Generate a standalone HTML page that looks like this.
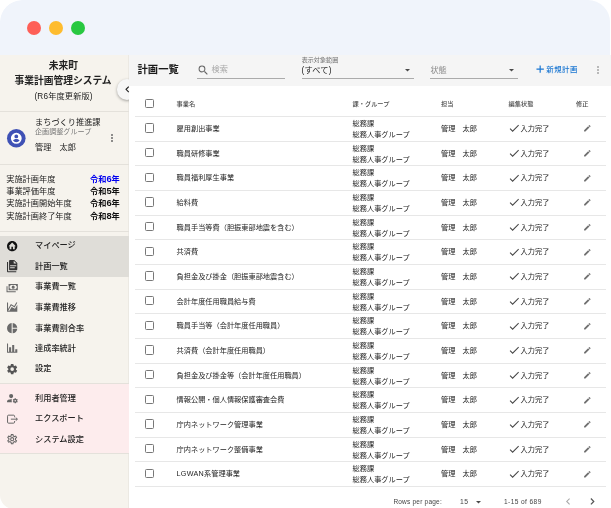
<!DOCTYPE html><html lang="ja"><head><meta charset="utf-8"><title>計画一覧</title><style>
*{box-sizing:border-box;margin:0;padding:0}
html,body{width:611px;height:508px;overflow:hidden;background:#fff}
body{font-family:"Liberation Sans","Noto Sans CJK JP",sans-serif;color:#222;position:relative}
.win{will-change:transform;position:absolute;left:0;top:0;width:611px;height:509px;border-radius:22px 0 0 14px;overflow:hidden}
.bar{position:absolute;left:0;top:0;width:609.6px;height:56px;background:#f0f4fb;border-radius:22px 22px 0 0}
.dot{position:absolute;top:20.5px;width:14px;height:14px;border-radius:50%}
.side{position:absolute;left:0;top:54.7px;width:129.2px;height:456px;background:#f6f3ed;border-right:1px solid #ece9e3}
.main{position:absolute;left:129.2px;top:54.7px;width:481.8px;height:453.3px;background:#fff}
.tb{position:absolute;left:0;top:0;width:100%;height:31.8px;background:#f5f5f5}
.abs{position:absolute;white-space:nowrap}
.hline{position:absolute;height:0.7px;background:#e7e7e7}
.sdiv{position:absolute;left:0;width:129px;height:0.7px;background:#e4e1db}
.t{position:absolute;white-space:nowrap;line-height:1}
.cb{position:absolute;width:9.4px;height:9.4px;border:1px solid #787878;border-radius:1.4px;background:#fff}
.mi{position:absolute;left:35px;font-size:8.2px;font-weight:500;color:#222;line-height:1;white-space:nowrap}
svg{position:absolute;overflow:visible}
</style></head><body>
<div class="win"><div class="bar"></div>
<div class="dot" style="left:26.7px;background:#fe5f57"></div>
<div class="dot" style="left:48.6px;background:#febc2e"></div>
<div class="dot" style="left:70.7px;background:#28c840"></div>
<div class="side">
<div class="t" style="left:63.4px;transform:translateX(-50%);top:6.22px;font-size:9.75px;font-weight:700;color:#222;">未来町</div>
<div class="t" style="left:63.0px;transform:translateX(-50%);top:20.82px;font-size:9.75px;font-weight:700;color:#222;">事業計画管理システム</div>
<div class="t" style="left:63.6px;transform:translateX(-50%);top:38.00px;font-size:8.2px;font-weight:400;color:#222;letter-spacing:0.15px;">(R6年度更新版)</div>
<div class="sdiv" style="top:56.2px"></div>
<svg style="left:7.25px;top:74.4px" width="18.6" height="18.6" viewBox="0 0 24 24"><circle cx="12" cy="12" r="12" fill="#3f51b5"/><path fill="#fff" d="M12 5a7 7 0 1 0 0 14 7 7 0 0 0 0-14zm0 2.1a2.45 2.45 0 1 1 0 4.9 2.45 2.45 0 0 1 0-4.9zm0 10.1a5.1 5.1 0 0 1-4.2-2.25c.02-1.4 2.8-2.17 4.2-2.17s4.18.77 4.2 2.17A5.1 5.1 0 0 1 12 17.2z"/></svg>
<div class="t" style="left:35px;top:64.80px;font-size:8.2px;font-weight:400;color:#222;">まちづくり推進課</div>
<div class="t" style="left:35px;top:73.95px;font-size:7.1px;font-weight:400;color:#787878;">企画調整グループ</div>
<div class="t" style="left:35px;top:89.80px;font-size:8.2px;font-weight:400;color:#222;">管理　太郎</div>
<div class="abs" style="left:110.7px;top:79.15px;width:1.9px;height:1.9px;border-radius:50%;background:#6b6b6b"></div>
<div class="abs" style="left:110.7px;top:82.35px;width:1.9px;height:1.9px;border-radius:50%;background:#6b6b6b"></div>
<div class="abs" style="left:110.7px;top:85.55px;width:1.9px;height:1.9px;border-radius:50%;background:#6b6b6b"></div>
<div class="sdiv" style="top:109.8px"></div>
<div class="t" style="left:6.2px;top:121.30px;font-size:8.2px;font-weight:400;color:#222;">実施計画年度</div>
<div class="t" style="right:8.4px;top:121.30px;font-size:8.2px;font-weight:700;color:#0000f0;">令和<span style="font-size:9.3px;line-height:0">6</span>年</div>
<div class="t" style="left:6.2px;top:133.55px;font-size:8.2px;font-weight:400;color:#222;">事業評価年度</div>
<div class="t" style="right:8.4px;top:133.55px;font-size:8.2px;font-weight:700;color:#111;">令和<span style="font-size:9.3px;line-height:0">5</span>年</div>
<div class="t" style="left:6.2px;top:145.80px;font-size:8.2px;font-weight:400;color:#222;">実施計画開始年度</div>
<div class="t" style="right:8.4px;top:145.80px;font-size:8.2px;font-weight:700;color:#111;">令和<span style="font-size:9.3px;line-height:0">6</span>年</div>
<div class="t" style="left:6.2px;top:158.05px;font-size:8.2px;font-weight:400;color:#222;">実施計画終了年度</div>
<div class="t" style="right:8.4px;top:158.05px;font-size:8.2px;font-weight:700;color:#111;">令和<span style="font-size:9.3px;line-height:0">8</span>年</div>
<div class="sdiv" style="top:176.6px"></div>
<div class="abs" style="left:0;top:180.9px;width:129px;height:41.1px;background:#dfddd8"></div>
<div class="abs" style="left:0;top:328.7px;width:129px;height:69.9px;background:#fdeced"></div>
<div class="sdiv" style="top:328.4px"></div>
<div class="sdiv" style="top:398.6px"></div>
<div class="mi" style="top:187.70px">マイページ</div>
<svg style="left:6.2px;top:184.93px" width="12.34" height="12.34" viewBox="0 0 24 24"><path fill="#111" d="M19.07,4.93C17.22,3 14.66,1.96 12,2C9.34,1.96 6.79,3 4.94,4.93C3,6.78 1.96,9.34 2,12C1.96,14.66 3,17.21 4.93,19.06C6.78,21 9.34,22.04 12,22C14.66,22.04 17.21,21 19.06,19.07C21,17.22 22.04,14.66 22,12C22.04,9.34 21,6.78 19.07,4.930M17,12V18H13.500V13H10.500V18H7V12H5L12,5L19.040,12H17Z"/></svg>
<div class="mi" style="top:208.30px">計画一覧</div>
<svg style="left:6.2px;top:205.53px" width="12.34" height="12.34" viewBox="0 0 24 24"><path fill="#333" d="M4,4V22H20V24H4C2.900,24 2,23.100 2,22V4H4M15,7H20.500L15,1.500V7M8,0H16L22,6V18C22,19.110 21.110,20 20,20H8C6.890,20 6,19.100 6,18V2C6,0.890 6.890,0 8,0M17,16V14H8V16H17M20,12V10H8V12H20Z"/></svg>
<div class="mi" style="top:228.80px">事業費一覧</div>
<svg style="left:6.2px;top:226.03px" width="12.34" height="12.34" viewBox="0 0 24 24"><path fill="#6a6a6a" d="M5,6H23V18H5V6M14,9A3,3 0 0,1 17,12A3,3 0 0,1 14,15A3,3 0 0,1 11,12A3,3 0 0,1 14,9M9,8A2,2 0 0,1 7,10V14A2,2 0 0,1 9,16H19A2,2 0 0,1 21,14V10A2,2 0 0,1 19,8H9M1,10H3V20H19V22H1V10Z"/></svg>
<div class="mi" style="top:249.40px">事業費推移</div>
<svg style="left:6.2px;top:246.63px" width="12.34" height="12.34" viewBox="0 0 24 24"><path fill="#6a6a6a" d="M17.450,15.180L22,7.310V19L22,21H2V3H4V15.540L9.500,6L16,9.780L20.240,2.450L21.970,3.450L16.740,12.500L10.230,8.750L4.310,19H6.570L10.960,11.440L17.450,15.180Z"/></svg>
<div class="mi" style="top:269.90px">事業費割合率</div>
<svg style="left:6.2px;top:267.13px" width="12.34" height="12.34" viewBox="0 0 24 24"><path fill="#6a6a6a" d="M11,2V22C5.900,21.500 2,17.200 2,12C2,6.800 5.900,2.500 11,2M13,2V11H22C21.500,6.200 17.800,2.500 13,2M13,13V22C17.700,21.500 21.500,17.800 22,13H13Z"/></svg>
<div class="mi" style="top:290.50px">達成率統計</div>
<svg style="left:6.2px;top:287.73px" width="12.34" height="12.34" viewBox="0 0 24 24"><path fill="#6a6a6a" d="M22,21H2V3H4V19H6V10H10V19H12V6H16V19H18V14H22V21Z"/></svg>
<div class="mi" style="top:310.70px">設定</div>
<svg style="left:6.2px;top:307.93px" width="12.34" height="12.34" viewBox="0 0 24 24"><path fill="#555" d="M12,15.5A3.5,3.5 0 0,1 8.5,12A3.5,3.5 0 0,1 12,8.5A3.5,3.5 0 0,1 15.5,12A3.5,3.5 0 0,1 12,15.5M19.43,12.97C19.47,12.65 19.5,12.33 19.5,12C19.5,11.67 19.47,11.34 19.43,11L21.54,9.37C21.73,9.22 21.78,8.95 21.66,8.73L19.66,5.27C19.54,5.05 19.27,4.96 19.05,5.05L16.56,6.05C16.04,5.66 15.5,5.32 14.87,5.07L14.5,2.42C14.46,2.18 14.25,2 14,2H10C9.75,2 9.54,2.18 9.5,2.42L9.13,5.07C8.5,5.32 7.96,5.66 7.44,6.05L4.95,5.05C4.73,4.96 4.46,5.05 4.34,5.27L2.34,8.73C2.21,8.95 2.27,9.22 2.46,9.37L4.57,11C4.53,11.34 4.5,11.67 4.5,12C4.5,12.33 4.53,12.65 4.57,12.97L2.46,14.63C2.27,14.78 2.21,15.05 2.34,15.27L4.34,18.73C4.46,18.95 4.73,19.03 4.95,18.95L7.44,17.94C7.96,18.34 8.5,18.68 9.13,18.93L9.5,21.58C9.54,21.82 9.75,22 10,22H14C14.25,22 14.46,21.82 14.5,21.58L14.87,18.93C15.5,18.67 16.04,18.34 16.56,17.94L19.05,18.95C19.27,19.03 19.54,18.95 19.66,18.73L21.66,15.27C21.78,15.05 21.73,14.78 21.54,14.63L19.43,12.97Z"/></svg>
<div class="mi" style="top:340.30px">利用者管理</div>
<svg style="left:6.2px;top:337.53px" width="12.34" height="12.34" viewBox="0 0 24 24"><path fill="#666" d="M10 4A4 4 0 0 0 6 8A4 4 0 0 0 10 12A4 4 0 0 0 14 8A4 4 0 0 0 10 4M17 12C16.870 12 16.760 12.090 16.740 12.210L16.550 13.530C16.250 13.660 15.960 13.820 15.700 14L14.460 13.500C14.350 13.500 14.220 13.500 14.150 13.630L13.150 15.360C13.090 15.470 13.110 15.600 13.210 15.680L14.270 16.500C14.250 16.670 14.240 16.830 14.240 17C14.240 17.170 14.250 17.330 14.270 17.500L13.210 18.320C13.120 18.400 13.090 18.530 13.150 18.640L14.150 20.370C14.210 20.500 14.340 20.500 14.460 20.500L15.700 20C15.960 20.180 16.240 20.350 16.550 20.470L16.740 21.790C16.760 21.910 16.860 22 17 22H19C19.110 22 19.220 21.910 19.240 21.790L19.430 20.470C19.730 20.340 20 20.180 20.270 20L21.500 20.500C21.630 20.500 21.760 20.500 21.830 20.370L22.830 18.640C22.890 18.530 22.860 18.400 22.770 18.320L21.700 17.500C21.720 17.330 21.740 17.170 21.740 17C21.740 16.830 21.730 16.670 21.700 16.500L22.760 15.680C22.850 15.600 22.880 15.470 22.820 15.360L21.820 13.630C21.760 13.500 21.630 13.500 21.500 13.500L20.270 14C20 13.820 19.730 13.650 19.420 13.530L19.230 12.210C19.220 12.090 19.110 12 19 12H17M10 14C5.580 14 2 15.790 2 18V20H11.680A7 7 0 0 1 11 17A7 7 0 0 1 11.640 14.090C11.110 14.030 10.560 14 10 14M18 15.500C18.830 15.500 19.500 16.170 19.500 17C19.500 17.830 18.830 18.500 18 18.500C17.160 18.500 16.500 17.830 16.500 17C16.500 16.170 17.170 15.500 18 15.500Z"/></svg>
<div class="mi" style="top:360.80px">エクスポート</div>
<svg style="left:6.2px;top:358.03px" width="12.34" height="12.34" viewBox="0 0 24 24"><path fill="none" stroke="#5c5c5c" stroke-width="1.800" stroke-linejoin="round" d="M16.600 8.300V6.200a2 2 0 0 0-2-2H5a2 2 0 0 0-2 2v11.600a2 2 0 0 0 2 2h9.600a2 2 0 0 0 2-2v-2.100"/><path fill="none" stroke="#5c5c5c" stroke-width="1.800" d="M9.500 12H22M19 8.900 22.200 12 19 15.100"/></svg>
<div class="mi" style="top:381.40px">システム設定</div>
<svg style="left:6.2px;top:378.63px" width="12.34" height="12.34" viewBox="0 0 24 24"><path fill="#666" d="M12,8A4,4 0 0,1 16,12A4,4 0 0,1 12,16A4,4 0 0,1 8,12A4,4 0 0,1 12,8M12,10A2,2 0 0,0 10,12A2,2 0 0,0 12,14A2,2 0 0,0 14,12A2,2 0 0,0 12,10M10,22C9.750,22 9.540,21.820 9.500,21.580L9.130,18.930C8.500,18.680 7.960,18.340 7.440,17.940L4.950,18.950C4.730,19.030 4.460,18.950 4.340,18.730L2.340,15.270C2.210,15.050 2.270,14.780 2.460,14.630L4.570,12.970L4.500,12L4.570,11L2.460,9.370C2.270,9.220 2.210,8.950 2.340,8.730L4.340,5.270C4.460,5.050 4.730,4.960 4.950,5.050L7.440,6.050C7.960,5.660 8.500,5.320 9.130,5.070L9.500,2.420C9.540,2.180 9.750,2 10,2H14C14.250,2 14.460,2.180 14.500,2.420L14.870,5.070C15.500,5.320 16.040,5.660 16.560,6.050L19.050,5.050C19.270,4.960 19.540,5.050 19.660,5.270L21.660,8.730C21.790,8.950 21.730,9.220 21.540,9.370L19.430,11L19.500,12L19.430,13L21.540,14.630C21.730,14.780 21.790,15.050 21.660,15.270L19.660,18.730C19.540,18.950 19.270,19.040 19.050,18.950L16.560,17.950C16.040,18.340 15.500,18.680 14.870,18.930L14.500,21.580C14.460,21.820 14.250,22 14,22H10M11.250,4L10.880,6.610C9.680,6.860 8.620,7.500 7.850,8.390L5.440,7.350L4.690,8.650L6.800,10.200C6.400,11.370 6.400,12.640 6.800,13.800L4.680,15.360L5.430,16.660L7.860,15.620C8.630,16.500 9.680,17.140 10.870,17.380L11.240,20H12.760L13.130,17.390C14.320,17.140 15.370,16.500 16.140,15.620L18.570,16.660L19.320,15.360L17.200,13.810C17.600,12.640 17.600,11.370 17.200,10.200L19.310,8.650L18.560,7.350L16.150,8.390C15.380,7.500 14.320,6.860 13.120,6.620L12.750,4H11.250Z"/></svg>
</div>
<div class="abs" style="left:116.8px;top:79.1px;width:20.6px;height:20.6px;border-radius:50%;background:#f7f7f7;box-shadow:0 1px 3px rgba(0,0,0,.35)"></div>
<div class="main">
<div class="tb"></div>
<div class="t" style="left:8.40px;top:10.65px;font-size:10.3px;font-weight:700;color:#1a1a1a;">計画一覧</div>
<svg style="left:67.8px;top:9.3px" width="12.6" height="12.6" viewBox="0 0 24 24"><path fill="#666" d="M9.500 3A6.500 6.500 0 0 1 16 9.500c0 1.610-.590 3.090-1.560 4.230l.270.270h.790l5 5-1.500 1.500-5-5v-.790l-.270-.270A6.516 6.516 0 0 1 9.500 16 6.500 6.500 0 0 1 3 9.500 6.500 6.500 0 0 1 9.500 3m0 2C7 5 5 7 5 9.500S7 14 9.500 14 14 12 14 9.500 12 5 9.500 5z"/></svg>
<div class="t" style="left:82.30px;top:11.80px;font-size:8.2px;font-weight:400;color:#a8a8a8;">検索</div>
<div class="hline" style="left:67.8px;top:23.2px;width:88.4px;background:#ababab"></div>
<div class="t" style="left:172.50px;top:2.45px;font-size:6.1px;font-weight:400;color:#707070;">表示対象範囲</div>
<div class="t" style="left:172.30px;top:12.20px;font-size:8.2px;font-weight:400;color:#222;letter-spacing:0.2px;">(すべて)</div>
<div class="hline" style="left:172.4px;top:23.2px;width:112.6px;background:#ababab"></div>
<svg style="left:276.05px;top:13.90px" width="5.0" height="2.5" viewBox="0 0 10 5"><path fill="#4a4a4a" d="M0 0h10L5 5z"/></svg>
<div class="t" style="left:301.20px;top:11.90px;font-size:8.2px;font-weight:400;color:#8a8a8a;">状態</div>
<div class="hline" style="left:300.8px;top:23.2px;width:87.8px;background:#ababab"></div>
<svg style="left:380.00px;top:13.90px" width="5.0" height="2.5" viewBox="0 0 10 5"><path fill="#4a4a4a" d="M0 0h10L5 5z"/></svg>
<svg style="left:404.5px;top:8.7px" width="12.34" height="12.34" viewBox="0 0 24 24"><path fill="#1976d2" d="M19.200 13.150h-6.050v6.050h-2.300v-6.050H4.800v-2.300h6.050V4.800h2.300v6.050h6.050z"/></svg>
<div class="t" style="left:417.00px;top:11.00px;font-size:7.4px;font-weight:500;color:#1976d2;letter-spacing:0.55px;">新規計画</div>
<div class="abs" style="left:468.2px;top:11.05px;width:1.9px;height:1.9px;border-radius:50%;background:#a6a6a6"></div>
<div class="abs" style="left:468.2px;top:14.15px;width:1.9px;height:1.9px;border-radius:50%;background:#a6a6a6"></div>
<div class="abs" style="left:468.2px;top:17.25px;width:1.9px;height:1.9px;border-radius:50%;background:#a6a6a6"></div>
<div class="cb" style="left:15.80px;top:43.90px"></div>
<div class="t" style="left:47.40px;top:46.50px;font-size:6.2px;font-weight:500;color:#4a4a4a;">事業名</div>
<div class="t" style="left:223.40px;top:46.50px;font-size:6.2px;font-weight:500;color:#4a4a4a;">課・グループ</div>
<div class="t" style="left:311.80px;top:46.50px;font-size:6.2px;font-weight:500;color:#4a4a4a;">担当</div>
<div class="t" style="left:379.40px;top:46.50px;font-size:6.2px;font-weight:500;color:#4a4a4a;">編集状態</div>
<div class="t" style="left:446.80px;top:46.50px;font-size:6.2px;font-weight:500;color:#4a4a4a;">修正</div>
<div class="hline" style="left:5.8px;top:61.40px;width:471px"></div>
<div class="cb" style="left:15.80px;top:68.59px"></div>
<div class="t" style="left:47.40px;top:70.24px;font-size:7.2px;font-weight:400;color:#222;">雇用創出事業</div>
<div class="t" style="left:223.40px;top:65.34px;font-size:7.2px;font-weight:400;color:#222;">総務課</div>
<div class="t" style="left:223.40px;top:76.24px;font-size:7.2px;font-weight:400;color:#222;">総務人事グループ</div>
<div class="t" style="left:311.80px;top:70.24px;font-size:7.2px;font-weight:400;color:#222;">管理　太郎</div>
<svg style="left:379.20px;top:67.72px" width="12.34" height="12.34" viewBox="0 0 24 24"><path fill="none" stroke="#454545" stroke-width="1.950" d="M4 12.900l5 5L20.700 6.200"/></svg>
<div class="t" style="left:391.40px;top:70.24px;font-size:7.2px;font-weight:400;color:#222;">入力完了</div>
<svg style="left:453.60px;top:69.74px" width="8.7" height="8.7" viewBox="0 0 24 24"><path fill="#707070" d="M20.710 7.040c.390-.390.390-1.040 0-1.410l-2.340-2.340c-.370-.390-1.020-.390-1.410 0l-1.840 1.830 3.750 3.750M3 17.250V21h3.750L17.810 9.930l-3.750-3.750L3 17.250z"/></svg>
<div class="hline" style="left:5.8px;top:86.07px;width:471px"></div>
<div class="cb" style="left:15.80px;top:93.25px"></div>
<div class="t" style="left:47.40px;top:94.91px;font-size:7.2px;font-weight:400;color:#222;">職員研修事業</div>
<div class="t" style="left:223.40px;top:90.01px;font-size:7.2px;font-weight:400;color:#222;">総務課</div>
<div class="t" style="left:223.40px;top:100.91px;font-size:7.2px;font-weight:400;color:#222;">総務人事グループ</div>
<div class="t" style="left:311.80px;top:94.91px;font-size:7.2px;font-weight:400;color:#222;">管理　太郎</div>
<svg style="left:379.20px;top:92.38px" width="12.34" height="12.34" viewBox="0 0 24 24"><path fill="none" stroke="#454545" stroke-width="1.950" d="M4 12.900l5 5L20.700 6.200"/></svg>
<div class="t" style="left:391.40px;top:94.91px;font-size:7.2px;font-weight:400;color:#222;">入力完了</div>
<svg style="left:453.60px;top:94.41px" width="8.7" height="8.7" viewBox="0 0 24 24"><path fill="#707070" d="M20.710 7.040c.390-.390.390-1.040 0-1.410l-2.340-2.340c-.370-.390-1.020-.390-1.410 0l-1.840 1.830 3.750 3.750M3 17.250V21h3.750L17.810 9.930l-3.750-3.750L3 17.250z"/></svg>
<div class="hline" style="left:5.8px;top:110.74px;width:471px"></div>
<div class="cb" style="left:15.80px;top:117.93px"></div>
<div class="t" style="left:47.40px;top:119.58px;font-size:7.2px;font-weight:400;color:#222;">職員福利厚生事業</div>
<div class="t" style="left:223.40px;top:114.68px;font-size:7.2px;font-weight:400;color:#222;">総務課</div>
<div class="t" style="left:223.40px;top:125.58px;font-size:7.2px;font-weight:400;color:#222;">総務人事グループ</div>
<div class="t" style="left:311.80px;top:119.58px;font-size:7.2px;font-weight:400;color:#222;">管理　太郎</div>
<svg style="left:379.20px;top:117.06px" width="12.34" height="12.34" viewBox="0 0 24 24"><path fill="none" stroke="#454545" stroke-width="1.950" d="M4 12.900l5 5L20.700 6.200"/></svg>
<div class="t" style="left:391.40px;top:119.58px;font-size:7.2px;font-weight:400;color:#222;">入力完了</div>
<svg style="left:453.60px;top:119.08px" width="8.7" height="8.7" viewBox="0 0 24 24"><path fill="#707070" d="M20.710 7.040c.390-.390.390-1.040 0-1.410l-2.340-2.340c-.370-.390-1.020-.390-1.410 0l-1.840 1.830 3.750 3.750M3 17.250V21h3.750L17.810 9.930l-3.750-3.750L3 17.250z"/></svg>
<div class="hline" style="left:5.8px;top:135.41px;width:471px"></div>
<div class="cb" style="left:15.80px;top:142.60px"></div>
<div class="t" style="left:47.40px;top:144.25px;font-size:7.2px;font-weight:400;color:#222;">給料費</div>
<div class="t" style="left:223.40px;top:139.35px;font-size:7.2px;font-weight:400;color:#222;">総務課</div>
<div class="t" style="left:223.40px;top:150.25px;font-size:7.2px;font-weight:400;color:#222;">総務人事グループ</div>
<div class="t" style="left:311.80px;top:144.25px;font-size:7.2px;font-weight:400;color:#222;">管理　太郎</div>
<svg style="left:379.20px;top:141.73px" width="12.34" height="12.34" viewBox="0 0 24 24"><path fill="none" stroke="#454545" stroke-width="1.950" d="M4 12.900l5 5L20.700 6.200"/></svg>
<div class="t" style="left:391.40px;top:144.25px;font-size:7.2px;font-weight:400;color:#222;">入力完了</div>
<svg style="left:453.60px;top:143.75px" width="8.7" height="8.7" viewBox="0 0 24 24"><path fill="#707070" d="M20.710 7.040c.390-.390.390-1.040 0-1.410l-2.340-2.340c-.370-.390-1.020-.390-1.410 0l-1.840 1.830 3.750 3.750M3 17.250V21h3.750L17.810 9.930l-3.750-3.750L3 17.250z"/></svg>
<div class="hline" style="left:5.8px;top:160.08px;width:471px"></div>
<div class="cb" style="left:15.80px;top:167.27px"></div>
<div class="t" style="left:47.40px;top:168.92px;font-size:7.2px;font-weight:400;color:#222;">職員手当等費（胆振東部地震を含む）</div>
<div class="t" style="left:223.40px;top:164.02px;font-size:7.2px;font-weight:400;color:#222;">総務課</div>
<div class="t" style="left:223.40px;top:174.92px;font-size:7.2px;font-weight:400;color:#222;">総務人事グループ</div>
<div class="t" style="left:311.80px;top:168.92px;font-size:7.2px;font-weight:400;color:#222;">管理　太郎</div>
<svg style="left:379.20px;top:166.40px" width="12.34" height="12.34" viewBox="0 0 24 24"><path fill="none" stroke="#454545" stroke-width="1.950" d="M4 12.900l5 5L20.700 6.200"/></svg>
<div class="t" style="left:391.40px;top:168.92px;font-size:7.2px;font-weight:400;color:#222;">入力完了</div>
<svg style="left:453.60px;top:168.42px" width="8.7" height="8.7" viewBox="0 0 24 24"><path fill="#707070" d="M20.710 7.040c.390-.390.390-1.040 0-1.410l-2.340-2.340c-.370-.390-1.020-.390-1.410 0l-1.840 1.830 3.750 3.750M3 17.250V21h3.750L17.810 9.930l-3.750-3.750L3 17.250z"/></svg>
<div class="hline" style="left:5.8px;top:184.75px;width:471px"></div>
<div class="cb" style="left:15.80px;top:191.94px"></div>
<div class="t" style="left:47.40px;top:193.59px;font-size:7.2px;font-weight:400;color:#222;">共済費</div>
<div class="t" style="left:223.40px;top:188.69px;font-size:7.2px;font-weight:400;color:#222;">総務課</div>
<div class="t" style="left:223.40px;top:199.59px;font-size:7.2px;font-weight:400;color:#222;">総務人事グループ</div>
<div class="t" style="left:311.80px;top:193.59px;font-size:7.2px;font-weight:400;color:#222;">管理　太郎</div>
<svg style="left:379.20px;top:191.06px" width="12.34" height="12.34" viewBox="0 0 24 24"><path fill="none" stroke="#454545" stroke-width="1.950" d="M4 12.900l5 5L20.700 6.200"/></svg>
<div class="t" style="left:391.40px;top:193.59px;font-size:7.2px;font-weight:400;color:#222;">入力完了</div>
<svg style="left:453.60px;top:193.08px" width="8.7" height="8.7" viewBox="0 0 24 24"><path fill="#707070" d="M20.710 7.040c.390-.390.390-1.040 0-1.410l-2.340-2.340c-.370-.390-1.020-.390-1.410 0l-1.840 1.830 3.750 3.750M3 17.250V21h3.750L17.810 9.930l-3.750-3.750L3 17.250z"/></svg>
<div class="hline" style="left:5.8px;top:209.42px;width:471px"></div>
<div class="cb" style="left:15.80px;top:216.61px"></div>
<div class="t" style="left:47.40px;top:218.26px;font-size:7.2px;font-weight:400;color:#222;">負担金及び掛金（胆振東部地震含む）</div>
<div class="t" style="left:223.40px;top:213.35px;font-size:7.2px;font-weight:400;color:#222;">総務課</div>
<div class="t" style="left:223.40px;top:224.26px;font-size:7.2px;font-weight:400;color:#222;">総務人事グループ</div>
<div class="t" style="left:311.80px;top:218.26px;font-size:7.2px;font-weight:400;color:#222;">管理　太郎</div>
<svg style="left:379.20px;top:215.74px" width="12.34" height="12.34" viewBox="0 0 24 24"><path fill="none" stroke="#454545" stroke-width="1.950" d="M4 12.900l5 5L20.700 6.200"/></svg>
<div class="t" style="left:391.40px;top:218.26px;font-size:7.2px;font-weight:400;color:#222;">入力完了</div>
<svg style="left:453.60px;top:217.75px" width="8.7" height="8.7" viewBox="0 0 24 24"><path fill="#707070" d="M20.710 7.040c.390-.390.390-1.040 0-1.410l-2.340-2.340c-.370-.390-1.020-.390-1.410 0l-1.840 1.830 3.750 3.750M3 17.250V21h3.750L17.810 9.930l-3.750-3.750L3 17.250z"/></svg>
<div class="hline" style="left:5.8px;top:234.09px;width:471px"></div>
<div class="cb" style="left:15.80px;top:241.28px"></div>
<div class="t" style="left:47.40px;top:242.93px;font-size:7.2px;font-weight:400;color:#222;">会計年度任用職員給与費</div>
<div class="t" style="left:223.40px;top:238.03px;font-size:7.2px;font-weight:400;color:#222;">総務課</div>
<div class="t" style="left:223.40px;top:248.93px;font-size:7.2px;font-weight:400;color:#222;">総務人事グループ</div>
<div class="t" style="left:311.80px;top:242.93px;font-size:7.2px;font-weight:400;color:#222;">管理　太郎</div>
<svg style="left:379.20px;top:240.41px" width="12.34" height="12.34" viewBox="0 0 24 24"><path fill="none" stroke="#454545" stroke-width="1.950" d="M4 12.900l5 5L20.700 6.200"/></svg>
<div class="t" style="left:391.40px;top:242.93px;font-size:7.2px;font-weight:400;color:#222;">入力完了</div>
<svg style="left:453.60px;top:242.43px" width="8.7" height="8.7" viewBox="0 0 24 24"><path fill="#707070" d="M20.710 7.040c.390-.390.390-1.040 0-1.410l-2.340-2.340c-.370-.390-1.020-.390-1.410 0l-1.840 1.830 3.750 3.750M3 17.250V21h3.750L17.810 9.930l-3.750-3.750L3 17.250z"/></svg>
<div class="hline" style="left:5.8px;top:258.76px;width:471px"></div>
<div class="cb" style="left:15.80px;top:265.94px"></div>
<div class="t" style="left:47.40px;top:267.59px;font-size:7.2px;font-weight:400;color:#222;">職員手当等（会計年度任用職員）</div>
<div class="t" style="left:223.40px;top:262.69px;font-size:7.2px;font-weight:400;color:#222;">総務課</div>
<div class="t" style="left:223.40px;top:273.59px;font-size:7.2px;font-weight:400;color:#222;">総務人事グループ</div>
<div class="t" style="left:311.80px;top:267.59px;font-size:7.2px;font-weight:400;color:#222;">管理　太郎</div>
<svg style="left:379.20px;top:265.07px" width="12.34" height="12.34" viewBox="0 0 24 24"><path fill="none" stroke="#454545" stroke-width="1.950" d="M4 12.900l5 5L20.700 6.200"/></svg>
<div class="t" style="left:391.40px;top:267.59px;font-size:7.2px;font-weight:400;color:#222;">入力完了</div>
<svg style="left:453.60px;top:267.09px" width="8.7" height="8.7" viewBox="0 0 24 24"><path fill="#707070" d="M20.710 7.040c.390-.390.390-1.040 0-1.410l-2.340-2.340c-.370-.390-1.020-.390-1.410 0l-1.840 1.830 3.750 3.750M3 17.250V21h3.750L17.810 9.930l-3.750-3.750L3 17.250z"/></svg>
<div class="hline" style="left:5.8px;top:283.43px;width:471px"></div>
<div class="cb" style="left:15.80px;top:290.62px"></div>
<div class="t" style="left:47.40px;top:292.27px;font-size:7.2px;font-weight:400;color:#222;">共済費（会計年度任用職員）</div>
<div class="t" style="left:223.40px;top:287.37px;font-size:7.2px;font-weight:400;color:#222;">総務課</div>
<div class="t" style="left:223.40px;top:298.27px;font-size:7.2px;font-weight:400;color:#222;">総務人事グループ</div>
<div class="t" style="left:311.80px;top:292.27px;font-size:7.2px;font-weight:400;color:#222;">管理　太郎</div>
<svg style="left:379.20px;top:289.75px" width="12.34" height="12.34" viewBox="0 0 24 24"><path fill="none" stroke="#454545" stroke-width="1.950" d="M4 12.900l5 5L20.700 6.200"/></svg>
<div class="t" style="left:391.40px;top:292.27px;font-size:7.2px;font-weight:400;color:#222;">入力完了</div>
<svg style="left:453.60px;top:291.77px" width="8.7" height="8.7" viewBox="0 0 24 24"><path fill="#707070" d="M20.710 7.040c.390-.390.390-1.040 0-1.410l-2.340-2.340c-.370-.390-1.020-.390-1.410 0l-1.840 1.830 3.750 3.750M3 17.250V21h3.750L17.810 9.930l-3.750-3.750L3 17.250z"/></svg>
<div class="hline" style="left:5.8px;top:308.10px;width:471px"></div>
<div class="cb" style="left:15.80px;top:315.29px"></div>
<div class="t" style="left:47.40px;top:316.94px;font-size:7.2px;font-weight:400;color:#222;">負担金及び掛金等（会計年度任用職員）</div>
<div class="t" style="left:223.40px;top:312.03px;font-size:7.2px;font-weight:400;color:#222;">総務課</div>
<div class="t" style="left:223.40px;top:322.94px;font-size:7.2px;font-weight:400;color:#222;">総務人事グループ</div>
<div class="t" style="left:311.80px;top:316.94px;font-size:7.2px;font-weight:400;color:#222;">管理　太郎</div>
<svg style="left:379.20px;top:314.42px" width="12.34" height="12.34" viewBox="0 0 24 24"><path fill="none" stroke="#454545" stroke-width="1.950" d="M4 12.900l5 5L20.700 6.200"/></svg>
<div class="t" style="left:391.40px;top:316.94px;font-size:7.2px;font-weight:400;color:#222;">入力完了</div>
<svg style="left:453.60px;top:316.44px" width="8.7" height="8.7" viewBox="0 0 24 24"><path fill="#707070" d="M20.710 7.040c.390-.390.390-1.040 0-1.410l-2.340-2.340c-.370-.390-1.020-.390-1.410 0l-1.840 1.830 3.750 3.750M3 17.250V21h3.750L17.810 9.930l-3.750-3.750L3 17.250z"/></svg>
<div class="hline" style="left:5.8px;top:332.77px;width:471px"></div>
<div class="cb" style="left:15.80px;top:339.95px"></div>
<div class="t" style="left:47.40px;top:341.60px;font-size:7.2px;font-weight:400;color:#222;">情報公開・個人情報保護審査会費</div>
<div class="t" style="left:223.40px;top:336.70px;font-size:7.2px;font-weight:400;color:#222;">総務課</div>
<div class="t" style="left:223.40px;top:347.60px;font-size:7.2px;font-weight:400;color:#222;">総務人事グループ</div>
<div class="t" style="left:311.80px;top:341.60px;font-size:7.2px;font-weight:400;color:#222;">管理　太郎</div>
<svg style="left:379.20px;top:339.08px" width="12.34" height="12.34" viewBox="0 0 24 24"><path fill="none" stroke="#454545" stroke-width="1.950" d="M4 12.900l5 5L20.700 6.200"/></svg>
<div class="t" style="left:391.40px;top:341.60px;font-size:7.2px;font-weight:400;color:#222;">入力完了</div>
<svg style="left:453.60px;top:341.10px" width="8.7" height="8.7" viewBox="0 0 24 24"><path fill="#707070" d="M20.710 7.040c.390-.390.390-1.040 0-1.410l-2.340-2.340c-.370-.390-1.020-.390-1.410 0l-1.840 1.830 3.750 3.750M3 17.250V21h3.750L17.810 9.930l-3.750-3.750L3 17.250z"/></svg>
<div class="hline" style="left:5.8px;top:357.44px;width:471px"></div>
<div class="cb" style="left:15.80px;top:364.63px"></div>
<div class="t" style="left:47.40px;top:366.28px;font-size:7.2px;font-weight:400;color:#222;">庁内ネットワーク管理事業</div>
<div class="t" style="left:223.40px;top:361.38px;font-size:7.2px;font-weight:400;color:#222;">総務課</div>
<div class="t" style="left:223.40px;top:372.28px;font-size:7.2px;font-weight:400;color:#222;">総務人事グループ</div>
<div class="t" style="left:311.80px;top:366.28px;font-size:7.2px;font-weight:400;color:#222;">管理　太郎</div>
<svg style="left:379.20px;top:363.76px" width="12.34" height="12.34" viewBox="0 0 24 24"><path fill="none" stroke="#454545" stroke-width="1.950" d="M4 12.900l5 5L20.700 6.200"/></svg>
<div class="t" style="left:391.40px;top:366.28px;font-size:7.2px;font-weight:400;color:#222;">入力完了</div>
<svg style="left:453.60px;top:365.78px" width="8.7" height="8.7" viewBox="0 0 24 24"><path fill="#707070" d="M20.710 7.040c.390-.390.390-1.040 0-1.410l-2.340-2.340c-.370-.390-1.020-.390-1.410 0l-1.840 1.830 3.750 3.750M3 17.250V21h3.750L17.810 9.930l-3.750-3.750L3 17.250z"/></svg>
<div class="hline" style="left:5.8px;top:382.11px;width:471px"></div>
<div class="cb" style="left:15.80px;top:389.30px"></div>
<div class="t" style="left:47.40px;top:390.94px;font-size:7.2px;font-weight:400;color:#222;">庁内ネットワーク整備事業</div>
<div class="t" style="left:223.40px;top:386.04px;font-size:7.2px;font-weight:400;color:#222;">総務課</div>
<div class="t" style="left:223.40px;top:396.94px;font-size:7.2px;font-weight:400;color:#222;">総務人事グループ</div>
<div class="t" style="left:311.80px;top:390.94px;font-size:7.2px;font-weight:400;color:#222;">管理　太郎</div>
<svg style="left:379.20px;top:388.43px" width="12.34" height="12.34" viewBox="0 0 24 24"><path fill="none" stroke="#454545" stroke-width="1.950" d="M4 12.900l5 5L20.700 6.200"/></svg>
<div class="t" style="left:391.40px;top:390.94px;font-size:7.2px;font-weight:400;color:#222;">入力完了</div>
<svg style="left:453.60px;top:390.44px" width="8.7" height="8.7" viewBox="0 0 24 24"><path fill="#707070" d="M20.710 7.040c.390-.390.390-1.040 0-1.410l-2.340-2.340c-.370-.390-1.020-.390-1.410 0l-1.840 1.830 3.750 3.750M3 17.250V21h3.750L17.810 9.930l-3.750-3.750L3 17.250z"/></svg>
<div class="hline" style="left:5.8px;top:406.78px;width:471px"></div>
<div class="cb" style="left:15.80px;top:413.96px"></div>
<div class="t" style="left:47.40px;top:415.61px;font-size:7.2px;font-weight:400;color:#222;"><span style="letter-spacing:0.28px">LGWAN</span>系管理事業</div>
<div class="t" style="left:223.40px;top:410.71px;font-size:7.2px;font-weight:400;color:#222;">総務課</div>
<div class="t" style="left:223.40px;top:421.61px;font-size:7.2px;font-weight:400;color:#222;">総務人事グループ</div>
<div class="t" style="left:311.80px;top:415.61px;font-size:7.2px;font-weight:400;color:#222;">管理　太郎</div>
<svg style="left:379.20px;top:413.09px" width="12.34" height="12.34" viewBox="0 0 24 24"><path fill="none" stroke="#454545" stroke-width="1.950" d="M4 12.900l5 5L20.700 6.200"/></svg>
<div class="t" style="left:391.40px;top:415.61px;font-size:7.2px;font-weight:400;color:#222;">入力完了</div>
<svg style="left:453.60px;top:415.11px" width="8.7" height="8.7" viewBox="0 0 24 24"><path fill="#707070" d="M20.710 7.040c.390-.390.390-1.040 0-1.410l-2.340-2.340c-.370-.390-1.020-.390-1.410 0l-1.840 1.830 3.750 3.750M3 17.250V21h3.750L17.810 9.930l-3.750-3.750L3 17.250z"/></svg>
<div class="hline" style="left:5.8px;top:431.45px;width:471px"></div>
<div class="t" style="left:264.20px;top:444.45px;font-size:6.5px;font-weight:400;color:#444;letter-spacing:0.22px;">Rows per page:</div>
<div class="t" style="left:330.70px;top:444.30px;font-size:6.8px;font-weight:400;color:#444;letter-spacing:0.5px;">15</div>
<svg style="left:346.50px;top:446.15px" width="5.0" height="2.5" viewBox="0 0 10 5"><path fill="#4a4a4a" d="M0 0h10L5 5z"/></svg>
<div class="t" style="left:374.80px;top:444.40px;font-size:6.6px;font-weight:400;color:#444;letter-spacing:0.4px;">1-15 of 689</div>
<svg style="left:435.80px;top:443.40px" width="6.500" height="6.900" viewBox="0 0 12 12.800"><path fill="none" stroke="#a8a8a8" stroke-width="2" d="M8.500 1 3.200 6.400l5.300 5.400"/></svg>
<svg style="left:460.10px;top:443.40px" width="6.500" height="6.900" viewBox="0 0 12 12.800"><path fill="none" stroke="#555" stroke-width="2.300" d="M3.500 1l5.300 5.400-5.300 5.400"/></svg>
</div>
<svg style="left:124.6px;top:86.2px" width="4.4" height="6.700" viewBox="0 0 10 15.200"><path fill="none" stroke="#222" stroke-width="2.600" d="M8.600 1.200 2.400 7.600l6.200 6.400"/></svg>
</div></body></html>
